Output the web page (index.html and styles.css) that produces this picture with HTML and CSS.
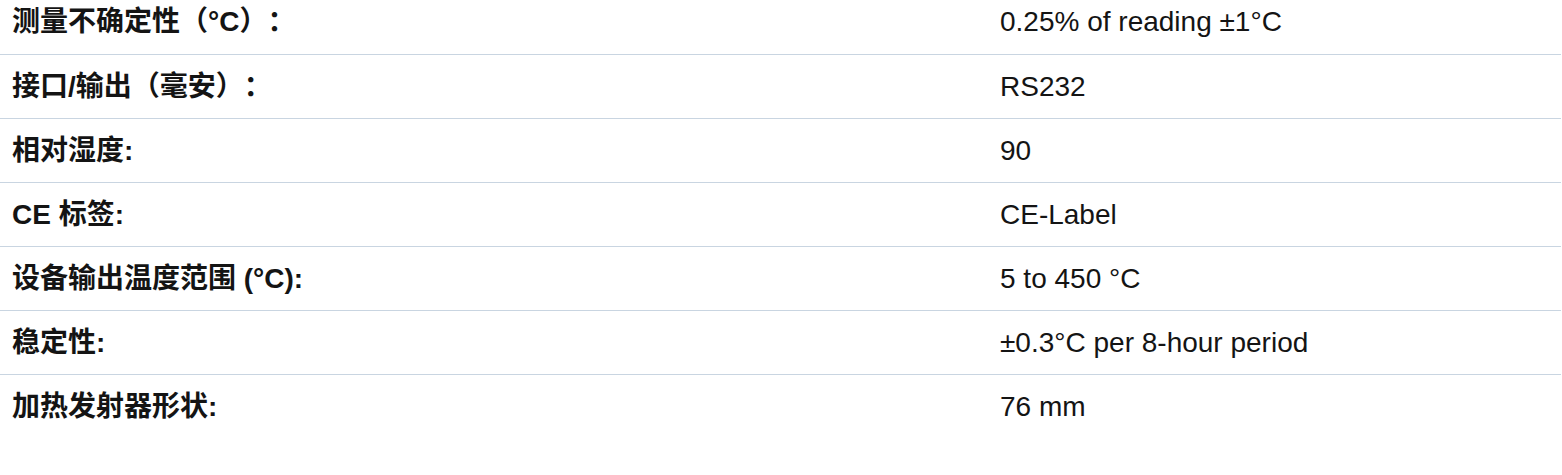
FILE: index.html
```html
<!DOCTYPE html>
<html lang="zh-CN">
<head>
<meta charset="utf-8">
<title>Specs</title>
<link rel="stylesheet" href="styles.css">
</head>
<body>
<div class="specs">
  <div class="row row-first"><div class="label">测量不确定性（°C）：</div><div class="value">0.25% of reading ±1°C</div></div>
  <div class="row"><div class="label">接口/输出（毫安）：</div><div class="value">RS232</div></div>
  <div class="row"><div class="label">相对湿度:</div><div class="value">90</div></div>
  <div class="row"><div class="label">CE 标签:</div><div class="value">CE-Label</div></div>
  <div class="row"><div class="label">设备输出温度范围 (°C):</div><div class="value">5 to 450 °C</div></div>
  <div class="row"><div class="label">稳定性:</div><div class="value">±0.3°C per 8-hour period</div></div>
  <div class="row row-last"><div class="label">加热发射器形状:</div><div class="value">76 mm</div></div>
</div>
</body>
</html>
```
FILE: styles.css
```css
html, body {
  margin: 0;
  padding: 0;
  background: #ffffff;
}
body {
  font-family: "Liberation Sans", Arial, "Noto Sans CJK SC", sans-serif;
  font-size: 28px;
  color: #141414;
}
.specs {
  width: 1561px;
}
.row {
  display: grid;
  grid-template-columns: 988px 1fr;
  align-items: center;
  height: 63px;
  padding-left: 12px;
  border-bottom: 1px solid #c9d5e1;
}
.row-first {
  height: 54px;
  align-items: start;
}
.row-first .label,
.row-first .value {
  margin-top: 6px;
}
.row-last {
  border-bottom: none;
}
.label {
  font-weight: bold;
  line-height: 32px;
  white-space: nowrap;
  text-spacing-trim: space-all;
}
.value {
  line-height: 32px;
  white-space: nowrap;
}
```
